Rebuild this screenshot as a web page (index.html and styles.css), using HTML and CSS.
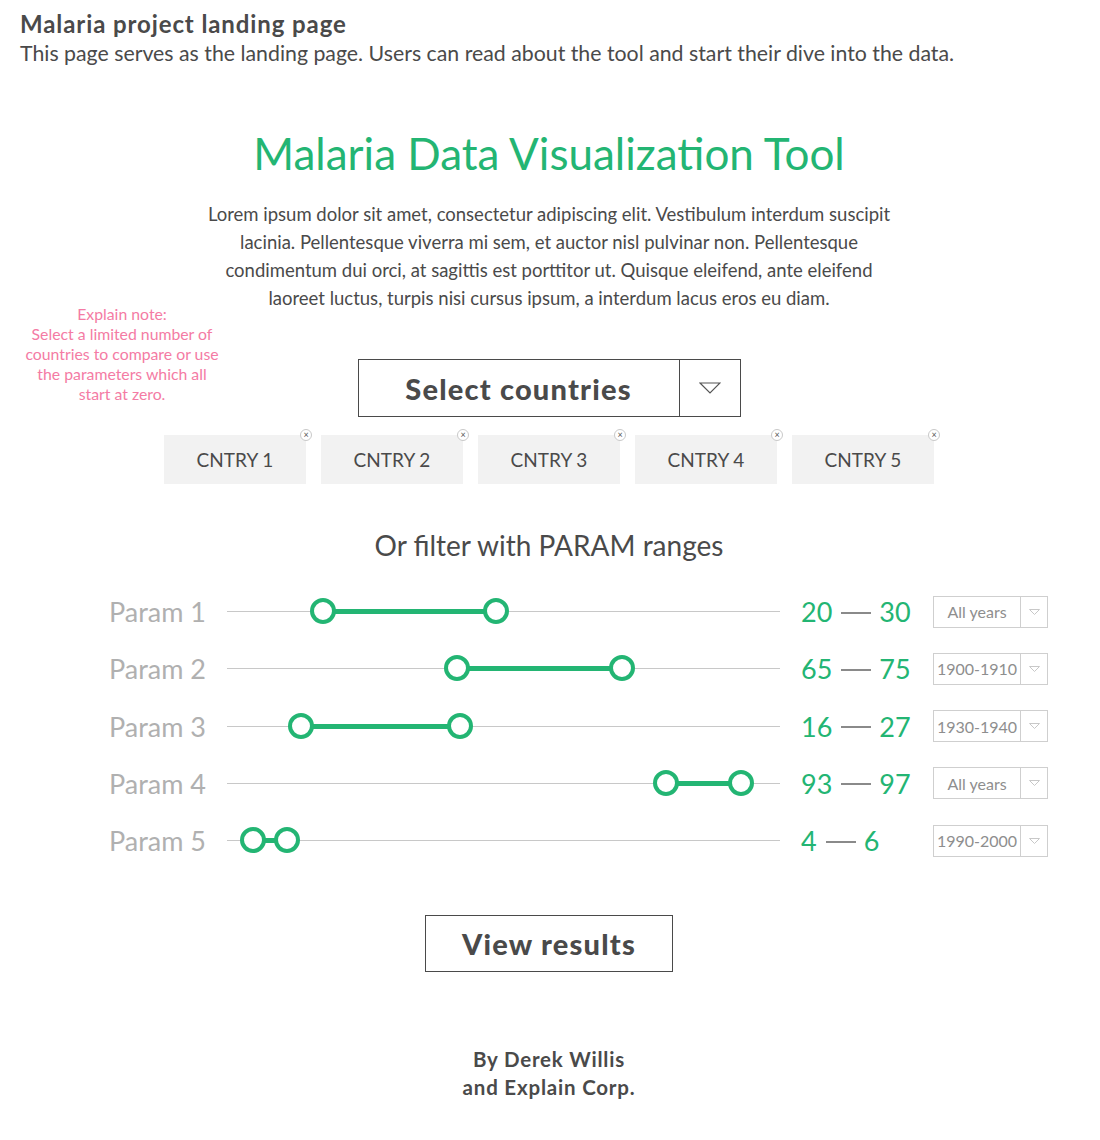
FILE: index.html
```html
<!DOCTYPE html>
<html lang="en">
<head>
<meta charset="utf-8">
<title>Malaria project landing page</title>
<link rel="stylesheet" href="styles.css">
</head>
<body>
<header class="doc-head">
  <h1 class="doc-title">Malaria project landing page</h1>
  <p class="doc-desc">This page serves as the landing page. Users can read about the tool and start their dive into the data.</p>
</header>

<main class="page">
  <h2 class="app-title">Malaria Data Visualization Tool</h2>
  <p class="intro">Lorem ipsum dolor sit amet, consectetur adipiscing elit. Vestibulum interdum suscipit<br>lacinia. Pellentesque viverra mi sem, et auctor nisl pulvinar non. Pellentesque<br>condimentum dui orci, at sagittis est porttitor ut. Quisque eleifend, ante eleifend<br>laoreet luctus, turpis nisi cursus ipsum, a interdum lacus eros eu diam.</p>

  <section class="countries">
    <p class="note">Explain note:<br>Select a limited number of<br>countries to compare or use<br>the parameters which all<br>start at zero.</p>
    <div class="select-box">
      <span class="select-label">Select countries</span>
      <span class="select-caret"><svg width="22" height="12" viewBox="0 0 22 12"><path d="M1 1 L11 11 L21 1 Z" fill="none" stroke="#555" stroke-width="1.2"/></svg></span>
    </div>
    <ul class="chips">
      <li class="chip">CNTRY 1<span class="chip-x">×</span></li>
      <li class="chip">CNTRY 2<span class="chip-x">×</span></li>
      <li class="chip">CNTRY 3<span class="chip-x">×</span></li>
      <li class="chip">CNTRY 4<span class="chip-x">×</span></li>
      <li class="chip">CNTRY 5<span class="chip-x">×</span></li>
    </ul>
  </section>

  <section class="filters">
    <h3 class="filter-title">Or filter with PARAM ranges</h3>
    <div class="rows">
      <div class="row">
        <span class="p-label">Param 1</span>
        <div class="track"><span class="range" style="left:17.4%;width:31.2%"></span><span class="knob" style="left:17.4%"></span><span class="knob" style="left:48.6%"></span></div>
        <span class="vals">20<span class="dash"></span>30</span>
        <span class="year"><span class="year-text">All years</span><span class="year-caret"><svg width="11" height="6" viewBox="0 0 11 6"><path d="M0.5 0.5 L5.5 5.5 L10.5 0.5 Z" fill="none" stroke="#c8c8c8" stroke-width="1"/></svg></span></span>
      </div>
      <div class="row">
        <span class="p-label">Param 2</span>
        <div class="track"><span class="range" style="left:41.6%;width:29.8%"></span><span class="knob" style="left:41.6%"></span><span class="knob" style="left:71.4%"></span></div>
        <span class="vals">65<span class="dash"></span>75</span>
        <span class="year"><span class="year-text">1900-1910</span><span class="year-caret"><svg width="11" height="6" viewBox="0 0 11 6"><path d="M0.5 0.5 L5.5 5.5 L10.5 0.5 Z" fill="none" stroke="#c8c8c8" stroke-width="1"/></svg></span></span>
      </div>
      <div class="row">
        <span class="p-label">Param 3</span>
        <div class="track"><span class="range" style="left:13.4%;width:28.7%"></span><span class="knob" style="left:13.4%"></span><span class="knob" style="left:42.1%"></span></div>
        <span class="vals">16<span class="dash"></span>27</span>
        <span class="year"><span class="year-text">1930-1940</span><span class="year-caret"><svg width="11" height="6" viewBox="0 0 11 6"><path d="M0.5 0.5 L5.5 5.5 L10.5 0.5 Z" fill="none" stroke="#c8c8c8" stroke-width="1"/></svg></span></span>
      </div>
      <div class="row">
        <span class="p-label">Param 4</span>
        <div class="track"><span class="range" style="left:79.4%;width:13.5%"></span><span class="knob" style="left:79.4%"></span><span class="knob" style="left:92.9%"></span></div>
        <span class="vals">93<span class="dash"></span>97</span>
        <span class="year"><span class="year-text">All years</span><span class="year-caret"><svg width="11" height="6" viewBox="0 0 11 6"><path d="M0.5 0.5 L5.5 5.5 L10.5 0.5 Z" fill="none" stroke="#c8c8c8" stroke-width="1"/></svg></span></span>
      </div>
      <div class="row">
        <span class="p-label">Param 5</span>
        <div class="track"><span class="range" style="left:4.7%;width:6.1%"></span><span class="knob" style="left:4.7%"></span><span class="knob" style="left:10.8%"></span></div>
        <span class="vals">4<span class="dash"></span>6</span>
        <span class="year"><span class="year-text">1990-2000</span><span class="year-caret"><svg width="11" height="6" viewBox="0 0 11 6"><path d="M0.5 0.5 L5.5 5.5 L10.5 0.5 Z" fill="none" stroke="#c8c8c8" stroke-width="1"/></svg></span></span>
      </div>
    </div>
  </section>

  <div class="actions">
    <button class="view-btn" type="button">View results</button>
  </div>

  <footer class="credits">By Derek Willis<br>and Explain Corp.</footer>
</main>
</body>
</html>
```

FILE: styles.css
```css
* { box-sizing: border-box; }

body {
  margin: 0;
  background: #fff;
  color: #4a4a4a;
  font-family: "Lato", "Open Sans", sans-serif;
}

.doc-head {
  padding: 9px 20px 0;
}

.doc-title {
  margin: 0;
  font-size: 24px;
  line-height: 30px;
  font-weight: 700;
  letter-spacing: 0.9px;
  color: #4a4a4a;
}

.doc-desc {
  margin: 1px 0 0;
  font-size: 21.3px;
  line-height: 26px;
  color: #4a4a4a;
}

.page {
  width: 1098px;
  display: flex;
  flex-direction: column;
  align-items: center;
}

.app-title {
  margin: 59px 0 0;
  font-size: 44px;
  line-height: 56px;
  font-weight: 400;
  color: #23b573;
}

.intro {
  margin: 19px 0 0;
  text-align: center;
  font-size: 18.5px;
  line-height: 28px;
  color: #4a4a4a;
}

.countries {
  position: relative;
  width: 100%;
  display: flex;
  flex-direction: column;
  align-items: center;
}

.note {
  position: absolute;
  left: 20px;
  top: -8px;
  width: 204px;
  margin: 0;
  text-align: center;
  font-size: 15.8px;
  line-height: 20px;
  color: #f47ba4;
}

.select-box {
  margin-top: 47px;
  width: 383px;
  height: 58px;
  border: 1px solid #4a4a4a;
  display: flex;
  align-items: stretch;
}

.select-label {
  flex: 1;
  display: flex;
  align-items: center;
  justify-content: center;
  font-size: 29px;
  font-weight: 900;
  color: #4a4a4a;
  letter-spacing: 1.2px;
}

.select-caret {
  width: 61px;
  border-left: 1px solid #4a4a4a;
  display: flex;
  align-items: center;
  justify-content: center;
}

.chips {
  list-style: none;
  margin: 18px 0 0;
  padding: 0;
  display: flex;
  gap: 15px;
}

.chip {
  position: relative;
  width: 142px;
  height: 49px;
  background: #f2f2f2;
  display: flex;
  align-items: center;
  justify-content: center;
  font-size: 19px;
  color: #4a4a4a;
}

.chip-x {
  position: absolute;
  right: -6px;
  top: -6px;
  width: 12px;
  height: 12px;
  border-radius: 50%;
  border: 1px solid #c9c9c9;
  background: #fff;
  font-size: 9px;
  line-height: 10px;
  text-align: center;
  color: #555;
}

.filters {
  width: 100%;
  display: flex;
  flex-direction: column;
  align-items: center;
}

.filter-title {
  margin: 43px 0 0;
  font-size: 28px;
  line-height: 36px;
  font-weight: 400;
  color: #4a4a4a;
}

.rows {
  margin-top: 32px;
  width: 100%;
  padding-left: 109px;
  display: flex;
  flex-direction: column;
  gap: 25.3px;
}

.row {
  display: grid;
  grid-template-columns: 118px 553px 153px 115px;
  align-items: center;
  height: 32px;
}

.p-label {
  font-size: 27px;
  color: #b0b0b0;
  white-space: nowrap;
}

.track {
  position: relative;
  height: 1px;
  background: #c8c8c8;
}

.range {
  position: absolute;
  top: -2px;
  height: 5px;
  background: #23b573;
}

.knob {
  position: absolute;
  top: -13px;
  width: 26px;
  height: 26px;
  margin-left: -13px;
  border-radius: 50%;
  border: 4px solid #23b573;
  background: #fff;
}

.vals {
  padding-left: 21px;
  display: flex;
  align-items: center;
  font-size: 27px;
  color: #23b573;
  white-space: nowrap;
}

.dash {
  display: inline-block;
  width: 30px;
  height: 2px;
  margin: 2px 8px 0 9px;
  background: #8a8a8a;
}

.year {
  height: 32px;
  border: 1px solid #cfcfcf;
  display: flex;
  align-items: stretch;
}

.year-text {
  flex: 1;
  display: flex;
  align-items: center;
  justify-content: center;
  font-size: 16px;
  color: #8e8e8e;
  white-space: nowrap;
}

.year-caret {
  width: 27px;
  border-left: 1px solid #cfcfcf;
  display: flex;
  align-items: center;
  justify-content: center;
}

.actions {
  margin-top: 59px;
}

.view-btn {
  width: 248px;
  height: 57px;
  border: 1px solid #4a4a4a;
  background: #fff;
  font-family: "Lato", "Open Sans", sans-serif;
  font-size: 29px;
  font-weight: 900;
  color: #4a4a4a;
  letter-spacing: 1.2px;
}

.credits {
  margin-top: 73px;
  text-align: center;
  font-size: 20.5px;
  line-height: 28px;
  font-weight: 700;
  letter-spacing: 0.8px;
  color: #4a4a4a;
}
```
